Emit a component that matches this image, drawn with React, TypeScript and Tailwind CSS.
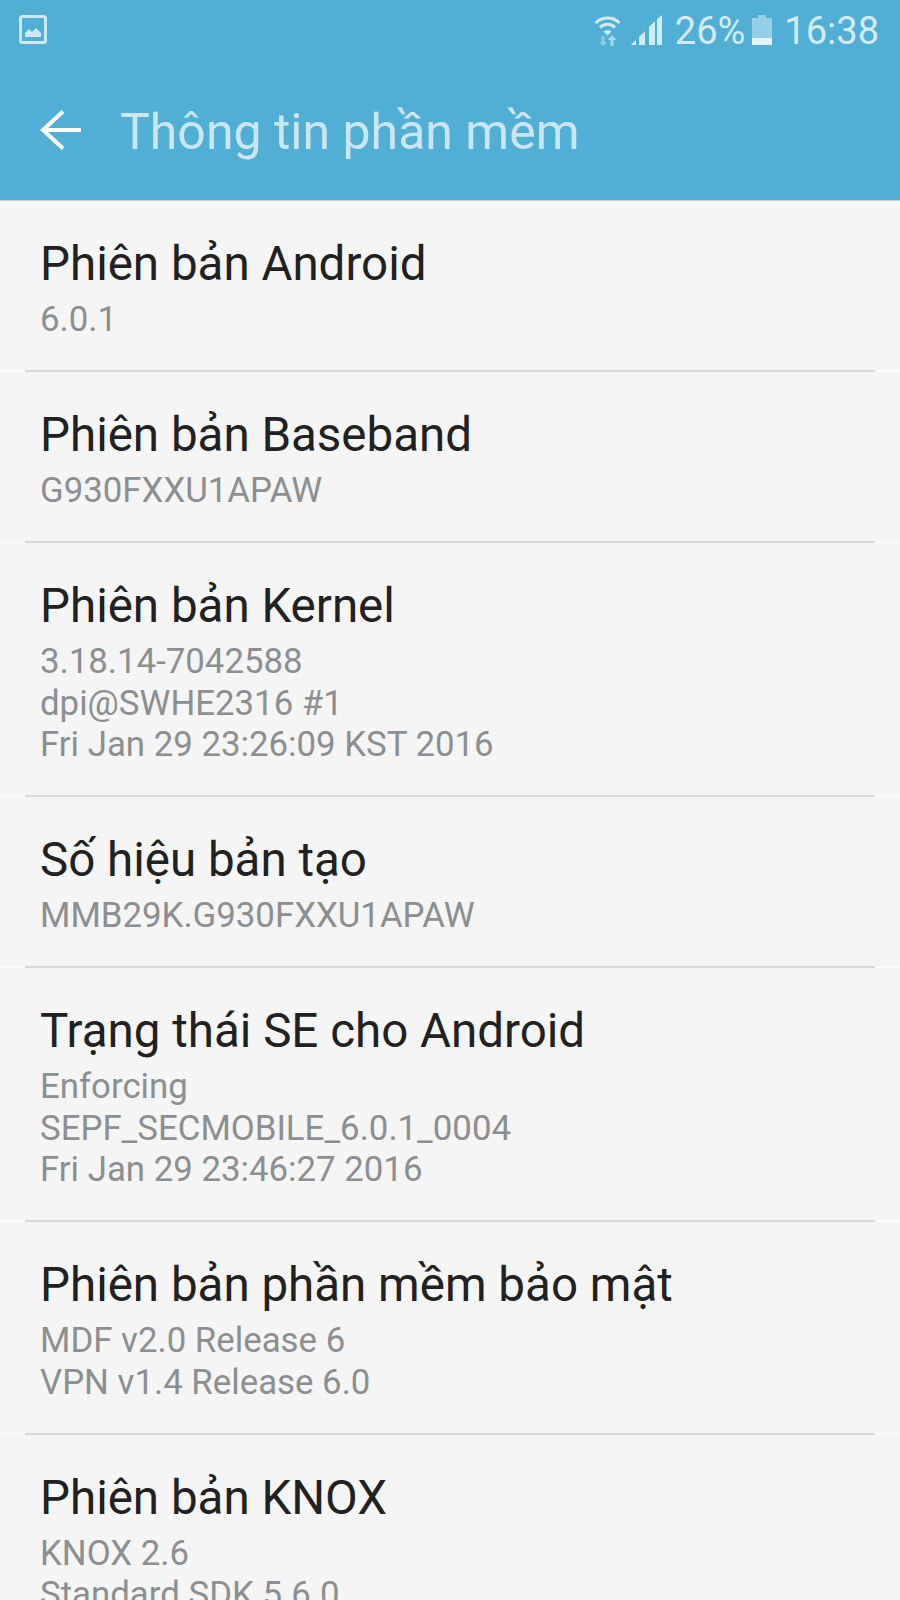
import React from "react";

const rows = [
  { title: "Phiên bản Android", lines: ["6.0.1"] },
  { title: "Phiên bản Baseband", lines: ["G930FXXU1APAW"] },
  { title: "Phiên bản Kernel", lines: ["3.18.14-7042588", "dpi@SWHE2316 #1", "Fri Jan 29 23:26:09 KST 2016"] },
  { title: "Số hiệu bản tạo", lines: ["MMB29K.G930FXXU1APAW"] },
  { title: "Trạng thái SE cho Android", lines: ["Enforcing", "SEPF_SECMOBILE_6.0.1_0004", "Fri Jan 29 23:46:27 2016"] },
  { title: "Phiên bản phần mềm bảo mật", lines: ["MDF v2.0 Release 6", "VPN v1.4 Release 6.0"] },
  { title: "Phiên bản KNOX", lines: ["KNOX 2.6", "Standard SDK 5.6.0"] },
];

const StatusIcons = () => (
  <>
    <svg width="27" height="31" viewBox="0 0 27 31" className="mr-[10px]">
      <path d="M1.5 8 A17 17 0 0 1 25.5 8" fill="none" stroke="#d3ebf5" strokeWidth="3" />
      <path d="M6 12.5 A10.5 10.5 0 0 1 21 12.5" fill="none" stroke="#d3ebf5" strokeWidth="3" />
      <path d="M9.5 16.5 A6 6 0 0 1 17.5 16.5 L13.5 20.5 Z" fill="#d3ebf5" />
      <path d="M7.5 21 V27 H5 L9.5 31 L13 27 H10.5 V21 Z" fill="#8fcbe3" />
      <path d="M16.5 31 V25 H13.5 L18 20 L22.5 25 H19.5 V31 Z" fill="#a9d8ea" />
    </svg>
    <svg width="31" height="30" viewBox="0 0 31 30" className="mr-[13px]">
      <path d="M0 30 L5 25 V30 Z" fill="#e4f3f9" />
      <path d="M8 22 L14 16 V30 H8 Z" fill="#d3ebf5" />
      <path d="M18 12 L24 6 V30 H18 Z" fill="#d3ebf5" />
      <path d="M26 4 L31 0 V30 H26 Z" fill="#d3ebf5" />
    </svg>
  </>
);

const App = () => {
  return (
    <div className="w-[900px] h-[1600px] overflow-hidden bg-[#f5f5f5] font-['Roboto',sans-serif]">
      <header className="h-[201px] bg-[#51aed4] border-b border-[#c9cfd2]">
        <div className="h-[60px] flex items-center justify-between pl-[19px] pr-[21px]">
          <svg width="29" height="30" viewBox="0 0 29 30">
            <rect x="1.5" y="1.5" width="25" height="26" rx="2" fill="none" stroke="#cfe8f3" strokeWidth="3" />
            <path d="M6 22 V18 L10 14 L13 17 L17 13 L22 18 V22 Z" fill="#cfe8f3" />
          </svg>
          <div className="flex items-center text-[38px] text-[#d3ebf5] leading-none">
            <StatusIcons />
            <span className="pt-[2px]">26%</span>
            <svg width="20" height="30" viewBox="0 0 20 30" className="ml-[7px] mr-[12px]">
              <path d="M6 0 H14 V3 H20 V30 H0 V3 H6 Z" fill="#96d0e6" />
              <rect x="0" y="23" width="20" height="7" fill="#e4f3f9" />
            </svg>
            <span className="pt-[2px]">16:38</span>
          </div>
        </div>
        <div className="h-[140px] flex items-center">
          <svg width="42" height="42" viewBox="0 0 42 42" className="ml-[40px]">
            <path d="M41 21 H3 M23 2.5 L3 21 L23 39.5" fill="none" stroke="#fff" strokeWidth="4" />
          </svg>
          <h1 className="ml-[38px] mt-[3px] text-[50px] text-[#cbe6f2] font-normal leading-none">Thông tin phần mềm</h1>
        </div>
      </header>
      <div>
        {rows.map((row) => (
          <div key={row.title} className="px-[25px] border-b-2 border-[#fafafa]">
            <div className="pt-[28px] pb-[29.5px] pl-[15px] border-b-2 border-[#d8d8d8] -mb-[2px]">
              <div className="text-[47.5px] leading-[70px] text-[#212121]">{row.title}</div>
              {row.lines.map((line) => (
                <div key={line} className="text-[34.8px] leading-[41.5px] text-[#8c8f91]">{line}</div>
              ))}
            </div>
          </div>
        ))}
      </div>
    </div>
  );
};

export default App;
